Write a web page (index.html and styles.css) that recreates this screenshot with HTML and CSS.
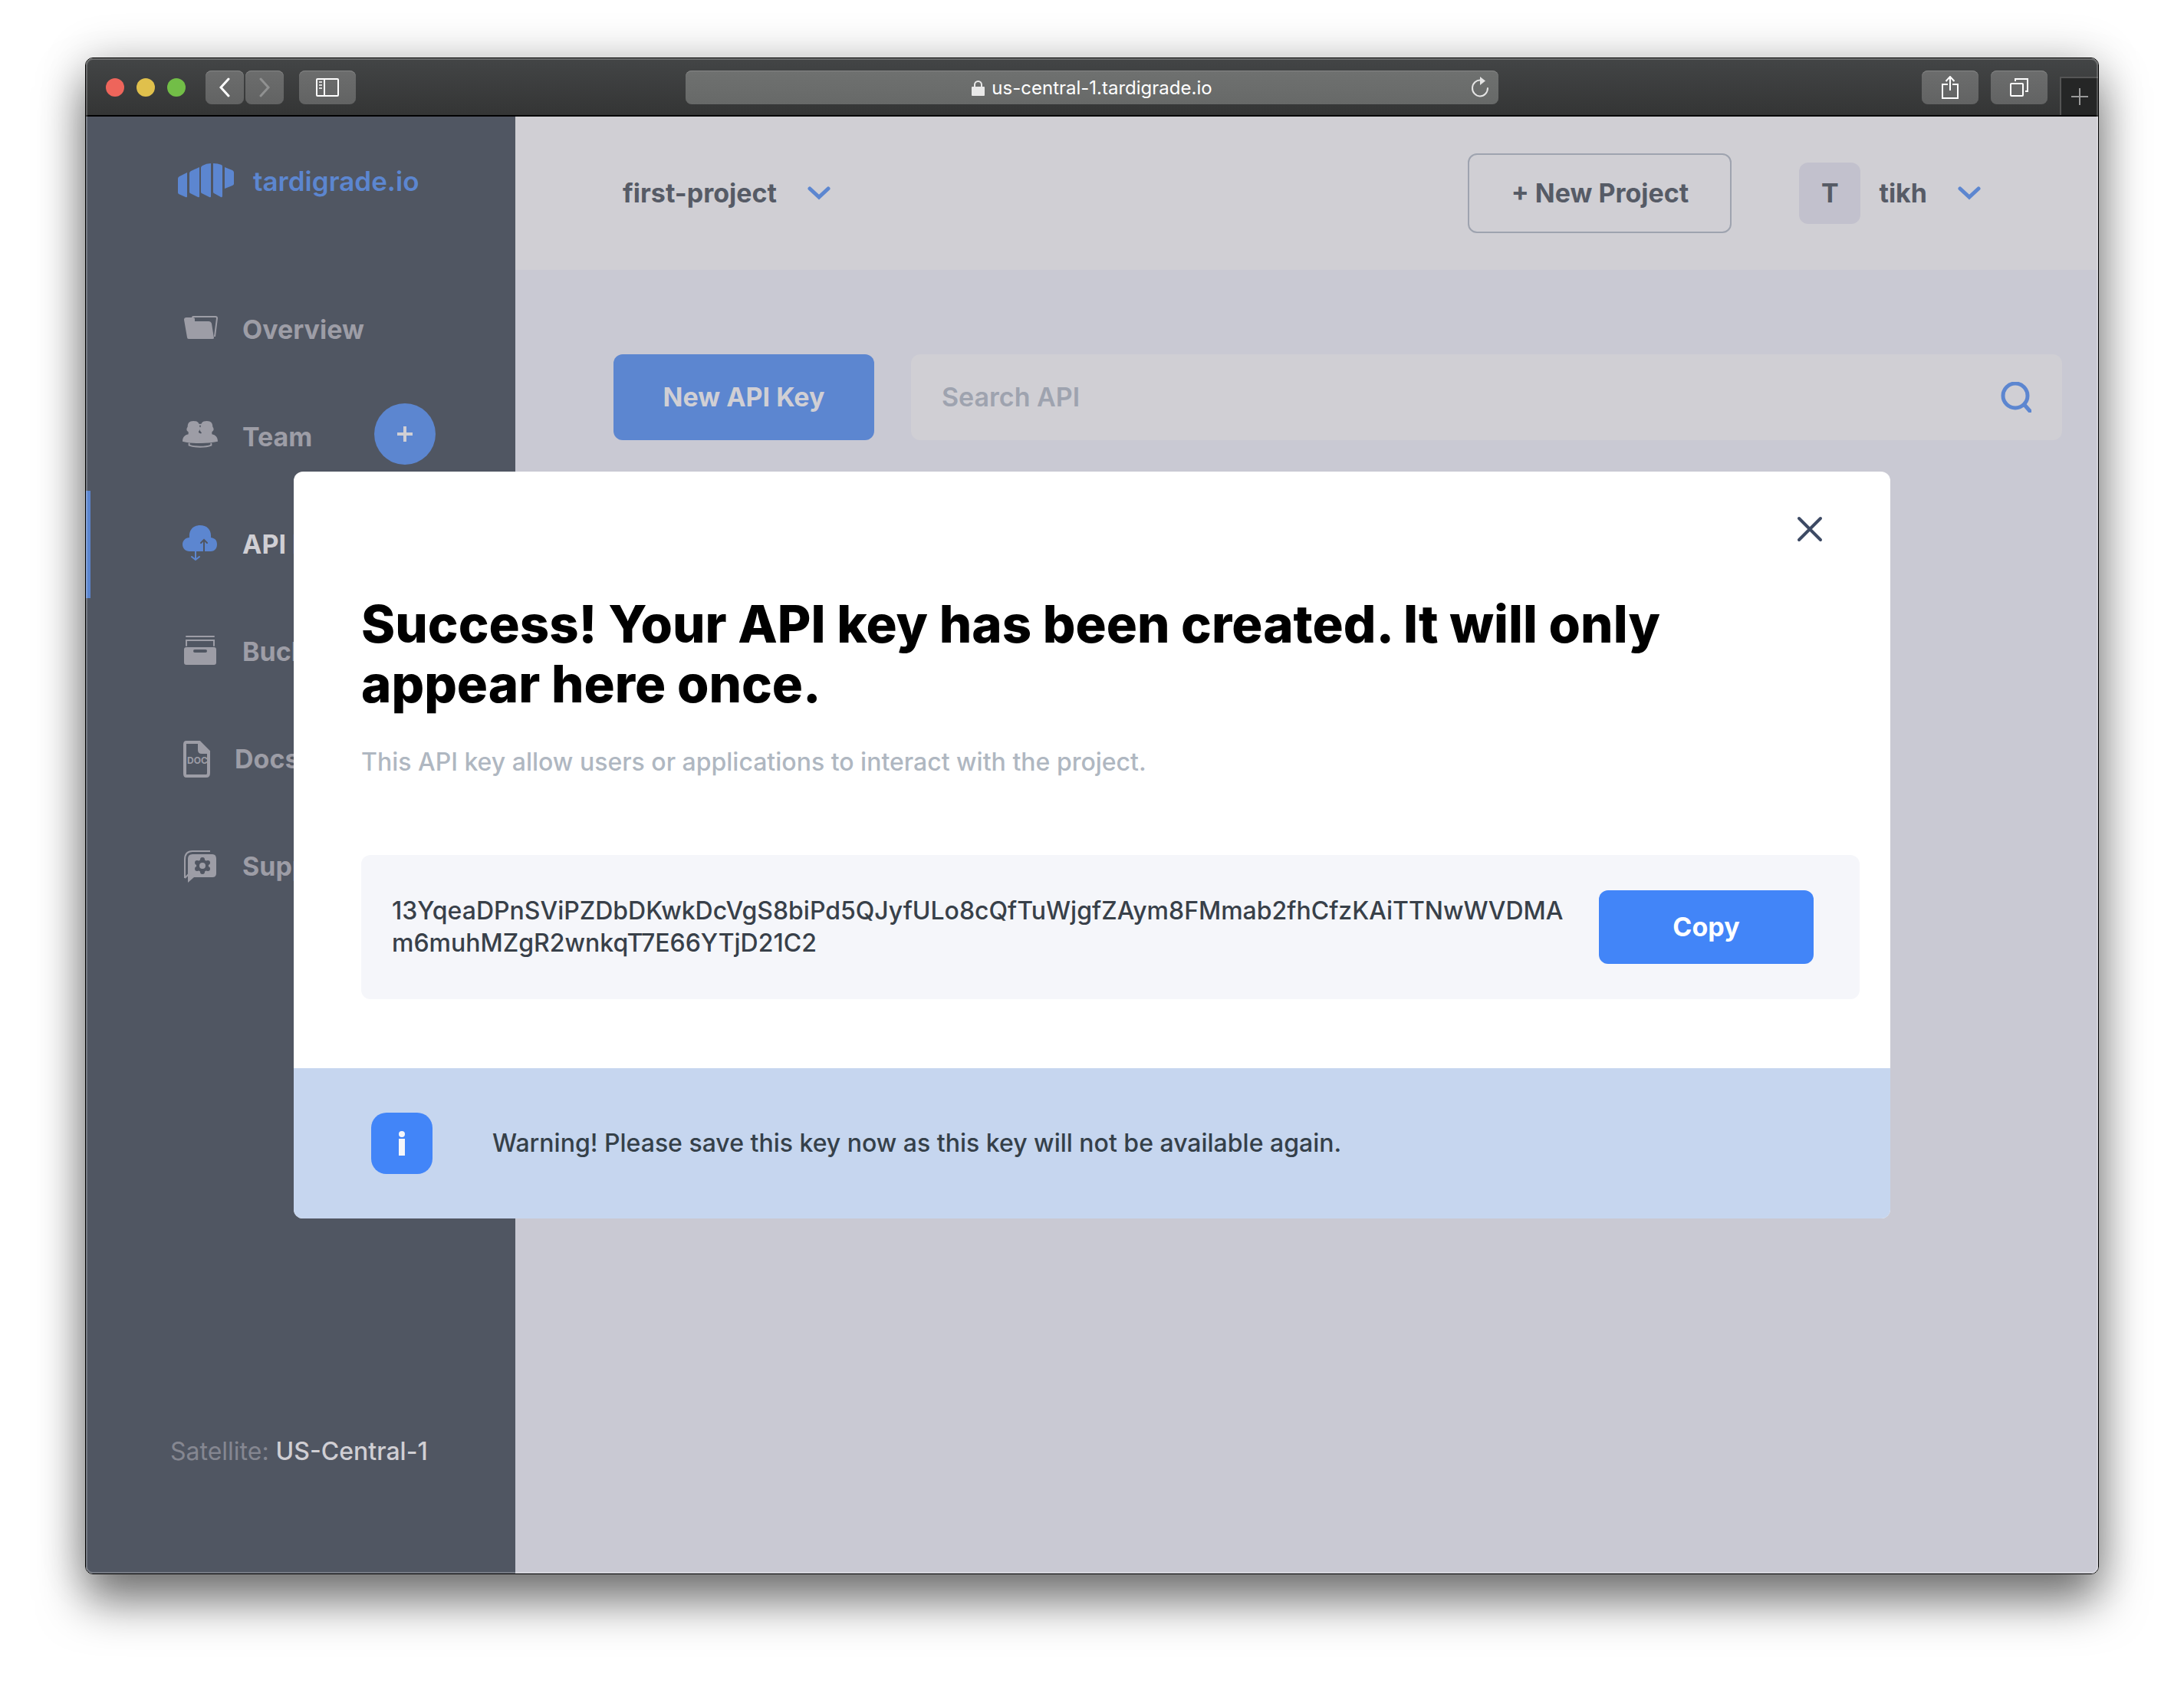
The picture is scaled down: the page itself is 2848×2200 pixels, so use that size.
FILE: index.html
```html
<!DOCTYPE html>
<html lang="en">
<head>
<meta charset="utf-8">
<title>API Keys - tardigrade.io</title>
<link rel="stylesheet" href="styles.css">
</head>
<body>
<div class="window">
  <header class="chrome">
    <div class="lights"><span class="light red"></span><span class="light yellow"></span><span class="light green"></span></div>
    <div class="history">
      <button class="tool narrow" aria-label="Back"><svg width="14" height="26" viewBox="0 0 14 26"><path d="M12 2 2 13l10 11" fill="none" stroke="#fff" stroke-width="3" stroke-linecap="round"/></svg></button>
      <button class="tool narrow" aria-label="Forward"><svg width="14" height="26" viewBox="0 0 14 26"><path d="M2 2l10 11L2 24" fill="none" stroke="#909191" stroke-width="3" stroke-linecap="round"/></svg></button>
    </div>
    <button class="tool" aria-label="Sidebar"><svg width="30" height="24" viewBox="0 0 30 24"><rect x="1" y="1" width="28" height="22" rx="1" fill="none" stroke="#fff" stroke-width="2"/><path d="M11 1v22" stroke="#fff" stroke-width="2"/><path d="M4 5h4M4 9h4M4 13h4" stroke="#d8d8d8" stroke-width="2"/></svg></button>
    <div class="address">
      <svg width="17" height="20" viewBox="0 0 17 20"><rect y="8" width="17" height="12" rx="1" fill="#e8e8e8"/><path d="M4 9V5.500a4.500 4.500 0 0 1 9 0V9" fill="none" stroke="#e8e8e8" stroke-width="2"/></svg>
      <span>us-central-1.tardigrade.io</span>
      <button class="reload" aria-label="Reload"><svg width="24" height="27" viewBox="0 0 24 27"><path d="M22 15a10 10.500 0 1 1-9-10.500" fill="none" stroke="#e4e4e4" stroke-width="2" stroke-linecap="round"/><path d="M12 0l7 5.500-7 5.500z" fill="#e4e4e4"/></svg></button>
    </div>
    <div class="actions">
      <button class="tool" aria-label="Share"><svg width="22" height="30" viewBox="0 0 22 30"><path d="M8 11H1v18h20V11h-7M11 19V1M5.500 7 11 1l5.500 6" fill="none" stroke="#fff" stroke-width="2"/></svg></button>
      <button class="tool" aria-label="Tabs"><svg width="24" height="24" viewBox="0 0 24 24"><rect x="1" y="7" width="16" height="16" rx="1" fill="none" stroke="#fff" stroke-width="2"/><path d="M7 4V1h16v16h-3" fill="none" stroke="#fff" stroke-width="2"/></svg></button>
    </div>
    <button class="newtab" aria-label="New tab"><svg width="22" height="22" viewBox="0 0 22 22"><path d="M11 0v22M0 11h22" stroke="#9a9a9a" stroke-width="2"/></svg></button>
  </header>

  <div class="page">
    <aside class="sidebar">
      <a class="logo" href="#">
        <svg width="74" height="45" viewBox="0 0 74 45"><g fill="#5c86d0"><path d="M0 20q0-2 2-3l10-5v31q0 2-2 1L1 40q-1-1-1-2z"/><path d="M15 13q0-2 2-3l11-5v38q0 2-2 1l-10-5q-1 0-1-2z"/><path d="M30 6q0-2 2-3 5-3 11-3v43q0 2-2 1l-10-5q-1 0-1-2z"/><path d="M46 0q6 0 11 2 1 1 1 2v38q0 3-2 2l-9-5q-1 0-1-2z"/><path d="M61 5l10 4q2 1 2 3v15q0 1-2 2l-10 4z"/></g></svg>
        <span>tardigrade.io</span>
      </a>
      <nav class="nav">
        <a class="item" href="#"><svg width="46" height="38" viewBox="0 0 46 38"><path d="M13 5V3q0-1 1-1h29q2 0 2 2l-3 24" fill="none" stroke="#9d9da6" stroke-width="2"/><path d="M2 6q0-3 3-3h8q3 0 3 2v3h18q3 0 4 3l3 19q0 1-2 1H8q-2 0-2-2z" fill="#9d9da6"/></svg><span>Overview</span></a>
        <a class="item" href="#"><svg width="46" height="44" viewBox="0 0 48 44"><g fill="#9d9da6"><path d="M15 0c6 0 8 3 8 7 2 3 1 5-1 7v2c3 1 7 3 9 6 2 3 2 5 1 7-7 2-20 2-32-1 0-6 3-9 8-10v-3c-3-2-3-4-1-7 0-5 2-8 8-8z"/><path d="M33 0c6 0 8 3 8 8 2 3 2 5-1 7v3c5 1 8 4 8 10-8 2-16 2-24 2l-1-11c3-2 3-3 3-3-3-3-3-5-1-9 0-4 2-7 8-7z"/></g><path d="M21 6q3-2 6 0M9 30v3c8 3 22 3 30 0v-3" fill="none" stroke="#9d9da6" stroke-width="2"/></svg><span>Team</span><button class="add" aria-label="Add member"><svg width="20" height="20" viewBox="0 0 20 20"><path d="M10 0v20M0 10h20" stroke="#d0cfd4" stroke-width="4"/></svg></button></a>
        <a class="item active" href="#"><svg width="46" height="52" viewBox="0 0 46 52"><path d="M9 17C8 7 14 1 23 1s15 6 14 16c6 1 8 4 8 9 0 6-4 9-8 9H9c-5 0-9-4-9-9s4-9 9-9z" fill="#5c86d0"/><path d="M28 35V20M24 24l4-4 4 4" fill="none" stroke="#505561" stroke-width="2" stroke-linecap="round"/><path d="M17 34v12M12 42l5 4 5-4" fill="none" stroke="#5c86d0" stroke-width="2" stroke-linecap="round"/></svg><span>API Keys</span></a>
        <a class="item" href="#"><svg width="46" height="42" viewBox="0 0 46 42"><path d="M5 1h36M5 13V6h36v7" fill="none" stroke="#9d9da6" stroke-width="2" stroke-linecap="round"/><path fill-rule="evenodd" d="M5 15h36q3 0 3 3v17q0 3-3 3H5q-3 0-3-3V18q0-3 3-3zm11 3a2 2 0 0 0 0 4h14a2 2 0 0 0 0-4z" fill="#9d9da6"/></svg><span>Buckets</span></a>
        <a class="item" href="#"><svg width="36" height="48" viewBox="0 0 36 48"><path d="M5 2h17l12 12v28q0 4-3 4H5q-2 0-2-3V5q0-3 2-3z" fill="none" stroke="#9d9da6" stroke-width="4"/><path d="M20 2v10q0 5 5 5h10V14L23 2z" fill="#9d9da6"/><text x="6" y="30" font-size="12" font-weight="700" fill="#9d9da6">DOC</text></svg><span>Docs</span></a>
        <a class="item" href="#"><svg width="46" height="44" viewBox="0 0 46 44"><path d="M3 37V13Q3 2 13 2h23M3 37l5-5" fill="none" stroke="#9d9da6" stroke-width="2"/><path d="M13 6h26q5 0 5 6v19q0 5-5 5H15l-8 7V12q0-6 6-6z" fill="#9d9da6"/><g transform="translate(26 21)"><g fill="#505561"><circle r="8"/><circle cy="-8" r="3"/><circle cy="8" r="3"/><circle cx="7" cy="-4" r="3"/><circle cx="7" cy="4" r="3"/><circle cx="-7" cy="-4" r="3"/><circle cx="-7" cy="4" r="3"/></g><circle r="4" fill="#9d9da6"/></g></svg><span>Support</span></a>
      </nav>
      <p class="satellite">Satellite: <span>US-Central-1</span></p>
    </aside>

    <main class="main">
      <div class="topbar">
        <button class="menu project">first-project<svg width="30" height="18" viewBox="0 0 30 18"><path d="M3 3l12 11L27 3" fill="none" stroke="#5c86d0" stroke-width="5" stroke-linecap="round"/></svg></button>
        <button class="new-project">+ New Project</button>
        <button class="menu"><span class="avatar">T</span>tikh<svg width="30" height="18" viewBox="0 0 30 18"><path d="M3 3l12 11L27 3" fill="none" stroke="#5c86d0" stroke-width="5" stroke-linecap="round"/></svg></button>
      </div>
      <div class="controls">
        <button class="new-key">New API Key</button>
        <div class="search">
          <input type="text" placeholder="Search API" aria-label="Search API">
          <svg width="40" height="40" viewBox="0 0 40 40"><circle cx="19" cy="18" r="16" fill="none" stroke="#5c86d0" stroke-width="5"/><path d="M31 30l7 8" stroke="#5c86d0" stroke-width="5" stroke-linecap="round"/></svg>
        </div>
      </div>
    </main>

    <div class="overlay">
      <section class="modal" role="dialog" aria-labelledby="title">
        <div class="body">
          <button class="close" aria-label="Close"><svg width="34" height="34" viewBox="0 0 34 34"><path d="M3 3l28 28M31 3 3 31" stroke="#3d4a64" stroke-width="4" stroke-linecap="round"/></svg></button>
          <h1 class="title" id="title">Success! Your API key has been created. It will only appear here once.</h1>
          <p class="subtitle">This API key allow users or applications to interact with the project.</p>
          <div class="keybox">
            <p class="key">13YqeaDPnSViPZDbDKwkDcVgS8biPd5QJyfULo8cQfTuWjgfZAym8FMmab2fhCfzKAiTTNwWVDMAm6muhMZgR2wnkqT7E66YTjD21C2</p>
            <button class="copy">Copy</button>
          </div>
        </div>
        <footer class="warning">
          <svg width="80" height="80" viewBox="0 0 80 80"><rect width="80" height="80" rx="20" fill="#4285f8"/><circle cx="40" cy="28" r="4" fill="#f5f6fa"/><path d="M40 34v22" stroke="#f5f6fa" stroke-width="8"/></svg>
          <p>Warning! Please save this key now as this key will not be available again.</p>
        </footer>
      </section>
    </div>
  </div>
</div>
</body>
</html>
```
FILE: styles.css
```css
* { box-sizing: border-box; }
html, body { height: 100%; }
body {
  margin: 0;
  padding: 75px 111px 147px;
  background: #fff;
  font-family: Inter, "Liberation Sans", sans-serif;
  font-size: 32px;
  line-height: 40px;
}
button { border: 0; padding: 0; background: none; font: inherit; color: inherit; }
svg { display: block; flex: none; }
p, h1 { margin: 0; }
a { color: inherit; text-decoration: none; }

.window {
  position: relative;
  display: flex;
  flex-direction: column;
  min-height: 100%;
  border: 1px solid #000;
  border-radius: 10px;
  overflow: hidden;
  box-shadow: 0 36px 60px rgba(0, 0, 0, .5), 0 0 60px rgba(0, 0, 0, .2);
}
.window::after {
  content: "";
  position: absolute;
  inset: 0;
  border: 2px solid rgba(255, 255, 255, .22);
  border-radius: 9px;
  pointer-events: none;
}

.chrome {
  display: flex;
  align-items: center;
  height: 76px;
  padding: 2px 0 0 26px;
  border-bottom: 2px solid #000;
  background: linear-gradient(#434546, #343535);
}
.lights { display: flex; gap: 16px; margin-right: 26px; }
.light { width: 24px; height: 24px; border-radius: 50%; }
.red { background: #ee655b; }
.yellow { background: #e0c04c; }
.green { background: #72be47; }
.history { display: flex; gap: 2px; margin-right: 20px; }
.tool {
  display: grid;
  place-items: center;
  width: 74px;
  height: 44px;
  border-radius: 8px;
  background: linear-gradient(#6c6d6d, #626363);
  box-shadow: inset 0 1px #858686;
}
.narrow { width: 50px; }
.address {
  position: relative;
  flex: 1;
  display: flex;
  align-items: center;
  justify-content: center;
  gap: 9px;
  height: 44px;
  margin: 0 552px 0 430px;
  padding-top: 2px;
  border-radius: 8px;
  background: linear-gradient(#6f7170, #676968);
  box-shadow: inset 0 1px #858686;
  color: #fff;
  font-size: 24px;
}
.reload { position: absolute; right: 12px; top: 8px; }
.actions { display: flex; gap: 16px; margin-right: 16px; }
.newtab {
  align-self: flex-end;
  display: grid;
  place-items: center;
  width: 50px;
  height: 50px;
  border: solid #555;
  border-width: 2px 0 0 2px;
  background: #252626;
}

.page { position: relative; flex: 1; display: flex; }
.sidebar {
  display: flex;
  flex-direction: column;
  width: 560px;
  background: #505662;
  color: #9d9da6;
}
.logo {
  display: flex;
  align-items: center;
  gap: 24px;
  height: 208px;
  padding: 0 0 41px 120px;
  color: #5c86d0;
  font-size: 35px;
  font-weight: 600;
}
.item {
  display: flex;
  align-items: center;
  gap: 32px;
  height: 140px;
  padding: 0 104px 0 126px;
  font-size: 34px;
  font-weight: 700;
}
.active { border-left: 6px solid #5c86d0; padding-left: 120px; color: #d0cfd4; }
.add {
  display: grid;
  place-items: center;
  width: 80px;
  height: 80px;
  margin: 0 0 8px auto;
  border-radius: 50%;
  background: #5c86d0;
}
.satellite { margin: auto 0 139px 110px; color: #858791; }
.satellite span { color: #d0cfd4; font-weight: 500; }

.main { flex: 1; background: #c9c9d3; color: #565b66; font-size: 34px; }
.topbar {
  display: flex;
  align-items: center;
  height: 200px;
  padding: 0 153px 0 140px;
  background: #d0cfd4;
  font-weight: 700;
}
.menu { display: flex; align-items: center; }
.menu svg { margin-left: 40px; }
.project { margin-right: auto; }
.new-project {
  width: 344px;
  height: 104px;
  margin-right: 88px;
  border: 2px solid #9ea3af;
  border-radius: 12px;
}
.avatar {
  display: grid;
  place-items: center;
  width: 80px;
  height: 80px;
  margin-right: 24px;
  border-radius: 12px;
  background: #c2c1cd;
}
.controls { display: flex; gap: 48px; padding: 110px 47px 0 128px; }
.new-key {
  width: 340px;
  height: 112px;
  border-radius: 12px;
  background: #5c86d0;
  color: #d0cfd4;
  font-weight: 700;
}
.search {
  flex: 1;
  display: flex;
  align-items: center;
  padding: 0 40px;
  border-radius: 12px;
  background: #d0cfd4;
}
.search input { flex: 1; border: 0; padding: 0; background: none; font: inherit; font-weight: 600; color: #565b66; }
.search input::placeholder { color: #9ea3af; opacity: 1; }

.overlay {
  position: absolute;
  inset: 0;
  display: grid;
  align-items: center;
  padding: 0 271px;
}
.modal { border-radius: 12px; overflow: hidden; background: #fff; }
.body { position: relative; padding: 160px 40px 90px 88px; }
.close { position: absolute; top: 58px; right: 88px; }
.title {
  margin-right: 200px;
  color: #000;
  font-size: 67px;
  font-weight: 800;
  line-height: 78px;
}
.subtitle { margin-top: 43px; color: #afb7c1; font-weight: 500; }
.keybox {
  display: flex;
  align-items: center;
  gap: 40px;
  min-height: 188px;
  margin-top: 101px;
  padding: 0 60px 0 40px;
  border-radius: 12px;
  background: #f5f6fa;
}
.key { flex: 1; color: #384049; font-weight: 500; line-height: 42px; overflow-wrap: anywhere; }
.copy {
  width: 280px;
  height: 96px;
  border-radius: 12px;
  background: #4285f8;
  color: #fff;
  font-size: 34px;
  font-weight: 700;
}
.warning {
  display: flex;
  align-items: center;
  gap: 78px;
  min-height: 196px;
  padding: 0 101px;
  background: #c6d6ef;
  color: #354049;
  font-weight: 500;
}
```
